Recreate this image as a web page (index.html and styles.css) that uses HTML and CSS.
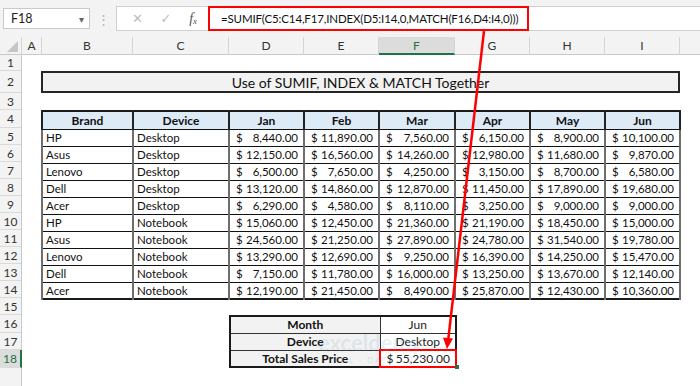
FILE: index.html
```html
<!DOCTYPE html>
<html>
<head>
<meta charset="utf-8">
<link rel="stylesheet" href="styles.css">
</head>
<body>
<div class="app">
  <div class="topbar">
    <div class="namebox"><span>F18</span><span class="dd">▾</span></div>
    <div class="vdots">⋮</div>
    <div class="fbar">
      <div class="ficons">
        <span class="ic">✕</span>
        <span class="ic">✓</span>
        <span class="fx">f<sub>x</sub></span>
      </div>
      <div class="formula">=SUMIF(C5:C14,F17,INDEX(D5:I14,0,MATCH(F16,D4:I4,0)))</div>
    </div>
  </div>

  <div class="colheads">
    <div class="ch corner"><span class="tri"></span></div>
    <div class="ch wA">A</div>
    <div class="ch wB">B</div>
    <div class="ch wC">C</div>
    <div class="ch wD">D</div>
    <div class="ch wD">E</div>
    <div class="ch wF active">F</div>
    <div class="ch wD">G</div>
    <div class="ch wD">H</div>
    <div class="ch wD">I</div>
    <div class="ch rest"></div>
  </div>

  <div class="body">
    <div class="rowheads">
      <div class="rh">1</div><div class="rh">2</div><div class="rh">3</div><div class="rh">4</div>
      <div class="rh">5</div><div class="rh">6</div><div class="rh">7</div><div class="rh">8</div>
      <div class="rh">9</div><div class="rh">10</div><div class="rh">11</div><div class="rh">12</div>
      <div class="rh">13</div><div class="rh">14</div><div class="rh">15</div><div class="rh">16</div>
      <div class="rh">17</div><div class="rh active">18</div><div class="rh last"></div>
    </div>

    <div class="cells">
      <div class="title">Use of SUMIF, INDEX &amp; MATCH Together</div>

      <table class="data">
        <colgroup>
          <col class="cB"><col class="cC"><col class="cD"><col class="cD"><col class="cF"><col class="cD"><col class="cD"><col class="cD">
        </colgroup>
        <thead>
          <tr><th>Brand</th><th>Device</th><th>Jan</th><th>Feb</th><th>Mar</th><th>Apr</th><th>May</th><th>Jun</th></tr>
        </thead>
        <tbody>
          <tr><td>HP</td><td>Desktop</td><td class="m"><span class="d">$</span>8,440.00</td><td class="m"><span class="d">$</span>11,890.00</td><td class="m"><span class="d">$</span>7,560.00</td><td class="m"><span class="d">$</span>6,150.00</td><td class="m"><span class="d">$</span>8,900.00</td><td class="m"><span class="d">$</span>10,100.00</td></tr>
          <tr><td>Asus</td><td>Desktop</td><td class="m"><span class="d">$</span>12,150.00</td><td class="m"><span class="d">$</span>16,560.00</td><td class="m"><span class="d">$</span>14,260.00</td><td class="m"><span class="d">$</span>12,980.00</td><td class="m"><span class="d">$</span>11,680.00</td><td class="m"><span class="d">$</span>9,870.00</td></tr>
          <tr><td>Lenovo</td><td>Desktop</td><td class="m"><span class="d">$</span>6,500.00</td><td class="m"><span class="d">$</span>7,650.00</td><td class="m"><span class="d">$</span>4,250.00</td><td class="m"><span class="d">$</span>3,150.00</td><td class="m"><span class="d">$</span>8,700.00</td><td class="m"><span class="d">$</span>6,580.00</td></tr>
          <tr><td>Dell</td><td>Desktop</td><td class="m"><span class="d">$</span>13,120.00</td><td class="m"><span class="d">$</span>14,860.00</td><td class="m"><span class="d">$</span>12,870.00</td><td class="m"><span class="d">$</span>11,450.00</td><td class="m"><span class="d">$</span>17,890.00</td><td class="m"><span class="d">$</span>19,680.00</td></tr>
          <tr><td>Acer</td><td>Desktop</td><td class="m"><span class="d">$</span>6,290.00</td><td class="m"><span class="d">$</span>4,580.00</td><td class="m"><span class="d">$</span>8,110.00</td><td class="m"><span class="d">$</span>3,250.00</td><td class="m"><span class="d">$</span>9,000.00</td><td class="m"><span class="d">$</span>9,000.00</td></tr>
          <tr><td>HP</td><td>Notebook</td><td class="m"><span class="d">$</span>15,060.00</td><td class="m"><span class="d">$</span>12,450.00</td><td class="m"><span class="d">$</span>21,360.00</td><td class="m"><span class="d">$</span>21,190.00</td><td class="m"><span class="d">$</span>18,450.00</td><td class="m"><span class="d">$</span>15,000.00</td></tr>
          <tr><td>Asus</td><td>Notebook</td><td class="m"><span class="d">$</span>24,560.00</td><td class="m"><span class="d">$</span>21,250.00</td><td class="m"><span class="d">$</span>27,890.00</td><td class="m"><span class="d">$</span>24,780.00</td><td class="m"><span class="d">$</span>31,540.00</td><td class="m"><span class="d">$</span>19,780.00</td></tr>
          <tr><td>Lenovo</td><td>Notebook</td><td class="m"><span class="d">$</span>13,290.00</td><td class="m"><span class="d">$</span>12,690.00</td><td class="m"><span class="d">$</span>9,250.00</td><td class="m"><span class="d">$</span>16,390.00</td><td class="m"><span class="d">$</span>14,250.00</td><td class="m"><span class="d">$</span>15,470.00</td></tr>
          <tr><td>Dell</td><td>Notebook</td><td class="m"><span class="d">$</span>7,150.00</td><td class="m"><span class="d">$</span>11,780.00</td><td class="m"><span class="d">$</span>16,000.00</td><td class="m"><span class="d">$</span>13,250.00</td><td class="m"><span class="d">$</span>13,670.00</td><td class="m"><span class="d">$</span>12,140.00</td></tr>
          <tr><td>Acer</td><td>Notebook</td><td class="m"><span class="d">$</span>12,190.00</td><td class="m"><span class="d">$</span>21,450.00</td><td class="m"><span class="d">$</span>8,490.00</td><td class="m"><span class="d">$</span>25,870.00</td><td class="m"><span class="d">$</span>12,430.00</td><td class="m"><span class="d">$</span>10,360.00</td></tr>
        </tbody>
      </table>

      <table class="lookup">
        <colgroup><col class="cLab"><col class="cF"></colgroup>
        <tr><th>Month</th><td>Jun</td></tr>
        <tr><th>Device</th><td>Desktop</td></tr>
        <tr><th>Total Sales Price</th><td class="m sel"><span class="d">$</span>55,230.00<span class="handle"></span></td></tr>
      </table>
    </div>
  </div>

  <div class="watermark">
    <div class="wm1">exceldemy</div>
    <div class="wm2">EXCEL · DATA · BI</div>
  </div>

  <svg class="arrow" width="700" height="386" viewBox="0 0 700 386">
    <line x1="484" y1="31" x2="448.3" y2="339" stroke="#f00" stroke-width="2.5"/>
    <polygon points="447,349 453,338.5 443,337.5" fill="#f00"/>
  </svg>
</div>
</body>
</html>
```

FILE: styles.css
```css
* { box-sizing: border-box; }
html, body { margin: 0; padding: 0; }
body {
  width: 700px;
  height: 386px;
  overflow: hidden;
  background: #fff;
  font-family: Lato, "Open Sans", sans-serif;
  color: #000;
}
.app { position: relative; width: 700px; height: 386px; }

/* formula bar */
.topbar {
  height: 37px;
  display: flex;
  align-items: center;
  padding: 0 0 0 3px;
  background: #f3f3f3;
}
.namebox {
  width: 87px;
  height: 21px;
  background: #fff;
  border: 1px solid #c9c9c9;
  display: flex;
  align-items: center;
  justify-content: space-between;
  padding: 0 5px 0 7px;
  font-size: 12.5px;
  color: #222;
}
.namebox .dd { font-size: 10px; color: #666; }
.vdots {
  width: 26px;
  text-align: center;
  color: #b5b5b5;
  font-size: 13px;
}
.fbar {
  flex: 1;
  height: 25px;
  display: flex;
  align-items: stretch;
  background: #fff;
  border: 1px solid #cfcfcf;
  border-right: none;
}
.ficons {
  width: 91px;
  flex: none;
  display: flex;
  align-items: center;
  justify-content: space-around;
  padding: 0 2px 0 6px;
}
.ic { color: #bdbdbd; font-size: 13px; font-family: "DejaVu Sans", sans-serif; }
.fx {
  font-family: "Liberation Serif", serif;
  font-style: italic;
  font-size: 14px;
  color: #555;
}
.fx sub { font-size: 9px; vertical-align: -1px; }
.formula {
  width: 321px;
  flex: none;
  overflow: hidden;
  border: 2px solid #f00;
  margin: -1px 0;
  display: flex;
  align-items: center;
  padding-left: 11px;
  font-size: 11.5px;
  letter-spacing: -0.15px;
  color: #111;
  white-space: nowrap;
}

/* column headers */
.colheads {
  display: flex;
  height: 18px;
  background: #f3f3f3;
  border-bottom: 1px solid #c9c9c9;
}
.ch {
  height: 18px;
  border-right: 1px solid #d4d4d4;
  text-align: center;
  font-size: 12px;
  line-height: 18px;
  color: #333;
  flex: none;
}
.corner { width: 22px; position: relative; }
.tri {
  position: absolute;
  right: 3px;
  bottom: 3px;
  width: 0;
  height: 0;
  border-left: 11px solid transparent;
  border-bottom: 11px solid #c5c5c5;
}
.wA { width: 20px; }
.wB { width: 91px; }
.wC { width: 96px; }
.wD { width: 75px; }
.wF { width: 76px; }
.ch.active {
  background: #dcdcdc;
  color: #217346;
  border-bottom: 2px solid #217346;
}
.ch.rest { flex: 1; border-right: none; }

/* body */
.body {
  display: flex;
  height: 331px;
}
.rowheads, .cells {
  display: grid;
  grid-template-rows: 16px 22px 17px 18px repeat(10, 17px) 17px 18px 17px 18px 1fr;
}
.rowheads {
  width: 22px;
  background: #f3f3f3;
  border-right: 1px solid #c9c9c9;
}
.rh {
  border-bottom: 1px solid #dadada;
  font-size: 12px;
  color: #333;
  display: flex;
  align-items: center;
  justify-content: center;
}
.rh.active {
  background: #dcdcdc;
  color: #217346;
  border-right: 2px solid #217346;
  margin-right: -1px;
}
.rh.last { border-bottom: none; }

.cells {
  flex: 1;
  grid-template-columns: 20px 91px 96px 75px 75px 76px 75px 75px 75px 1fr;
}

.title {
  grid-row: 2;
  grid-column: 2 / 10;
  margin-left: -1px;
  background: #f2f2f2;
  border: 2px solid #262626;
  display: flex;
  align-items: center;
  justify-content: center;
  font-size: 14px;
  color: #111;
}

table { border-collapse: collapse; table-layout: fixed; }
.cB { width: 91px; }
.cC { width: 96px; }
.cD { width: 75px; }
.cF { width: 76px; }
.cLab { width: 150px; }

.data {
  grid-row: 4 / 15;
  grid-column: 2 / 10;
  margin-left: -1px;
  width: 639px;
  border: 2px solid #1a1a1a;
  font-size: 11.5px;
}
.data th {
  height: 18px;
  background: #ddebf7;
  font-weight: 700;
  font-size: 12px;
  border: 1px solid #111;
  border-left: 2px solid #222;
  border-right: 2px solid #222;
  padding: 0;
  color: #111;
}
.data td {
  height: 17px;
  padding: 0 4px 0 3px;
  border-top: 1px solid #111;
  border-bottom: 1px solid #111;
  border-left: 2px solid #6e6e6e;
  border-right: 2px solid #6e6e6e;
  white-space: nowrap;
  color: #111;
}
td.m { text-align: right; padding: 0 5px 0 6px; }
.d { float: left; }

.lookup {
  grid-row: 16 / 19;
  grid-column: 4 / 7;
  width: 226px;
  border: 2px solid #1a1a1a;
  font-size: 12px;
}
.lookup th {
  background: #f2f2f2;
  font-weight: 700;
  color: #111;
  border: 1px solid #333;
  padding: 0;
  height: 17px;
}
.lookup td {
  text-align: center;
  border: 1px solid #333;
  color: #222;
  padding: 0;
  height: 17px;
}
.lookup td.m { text-align: right; padding: 0 5px 0 6px; }
.sel {
  position: relative;
  outline: 2px solid #f00;
  outline-offset: -1px;
}
.handle {
  position: absolute;
  right: -4px;
  bottom: -3px;
  width: 4px;
  height: 4px;
  background: #217346;
}

.watermark {
  position: absolute;
  left: 318px;
  top: 331px;
  pointer-events: none;
  text-align: center;
}
.wm1 {
  font-size: 22px;
  font-weight: 700;
  color: rgba(120, 160, 200, 0.18);
  line-height: 24px;
}
.wm2 {
  font-size: 8px;
  letter-spacing: 2px;
  color: rgba(120, 140, 160, 0.22);
}

.arrow {
  position: absolute;
  left: 0;
  top: 0;
  pointer-events: none;
}
```
